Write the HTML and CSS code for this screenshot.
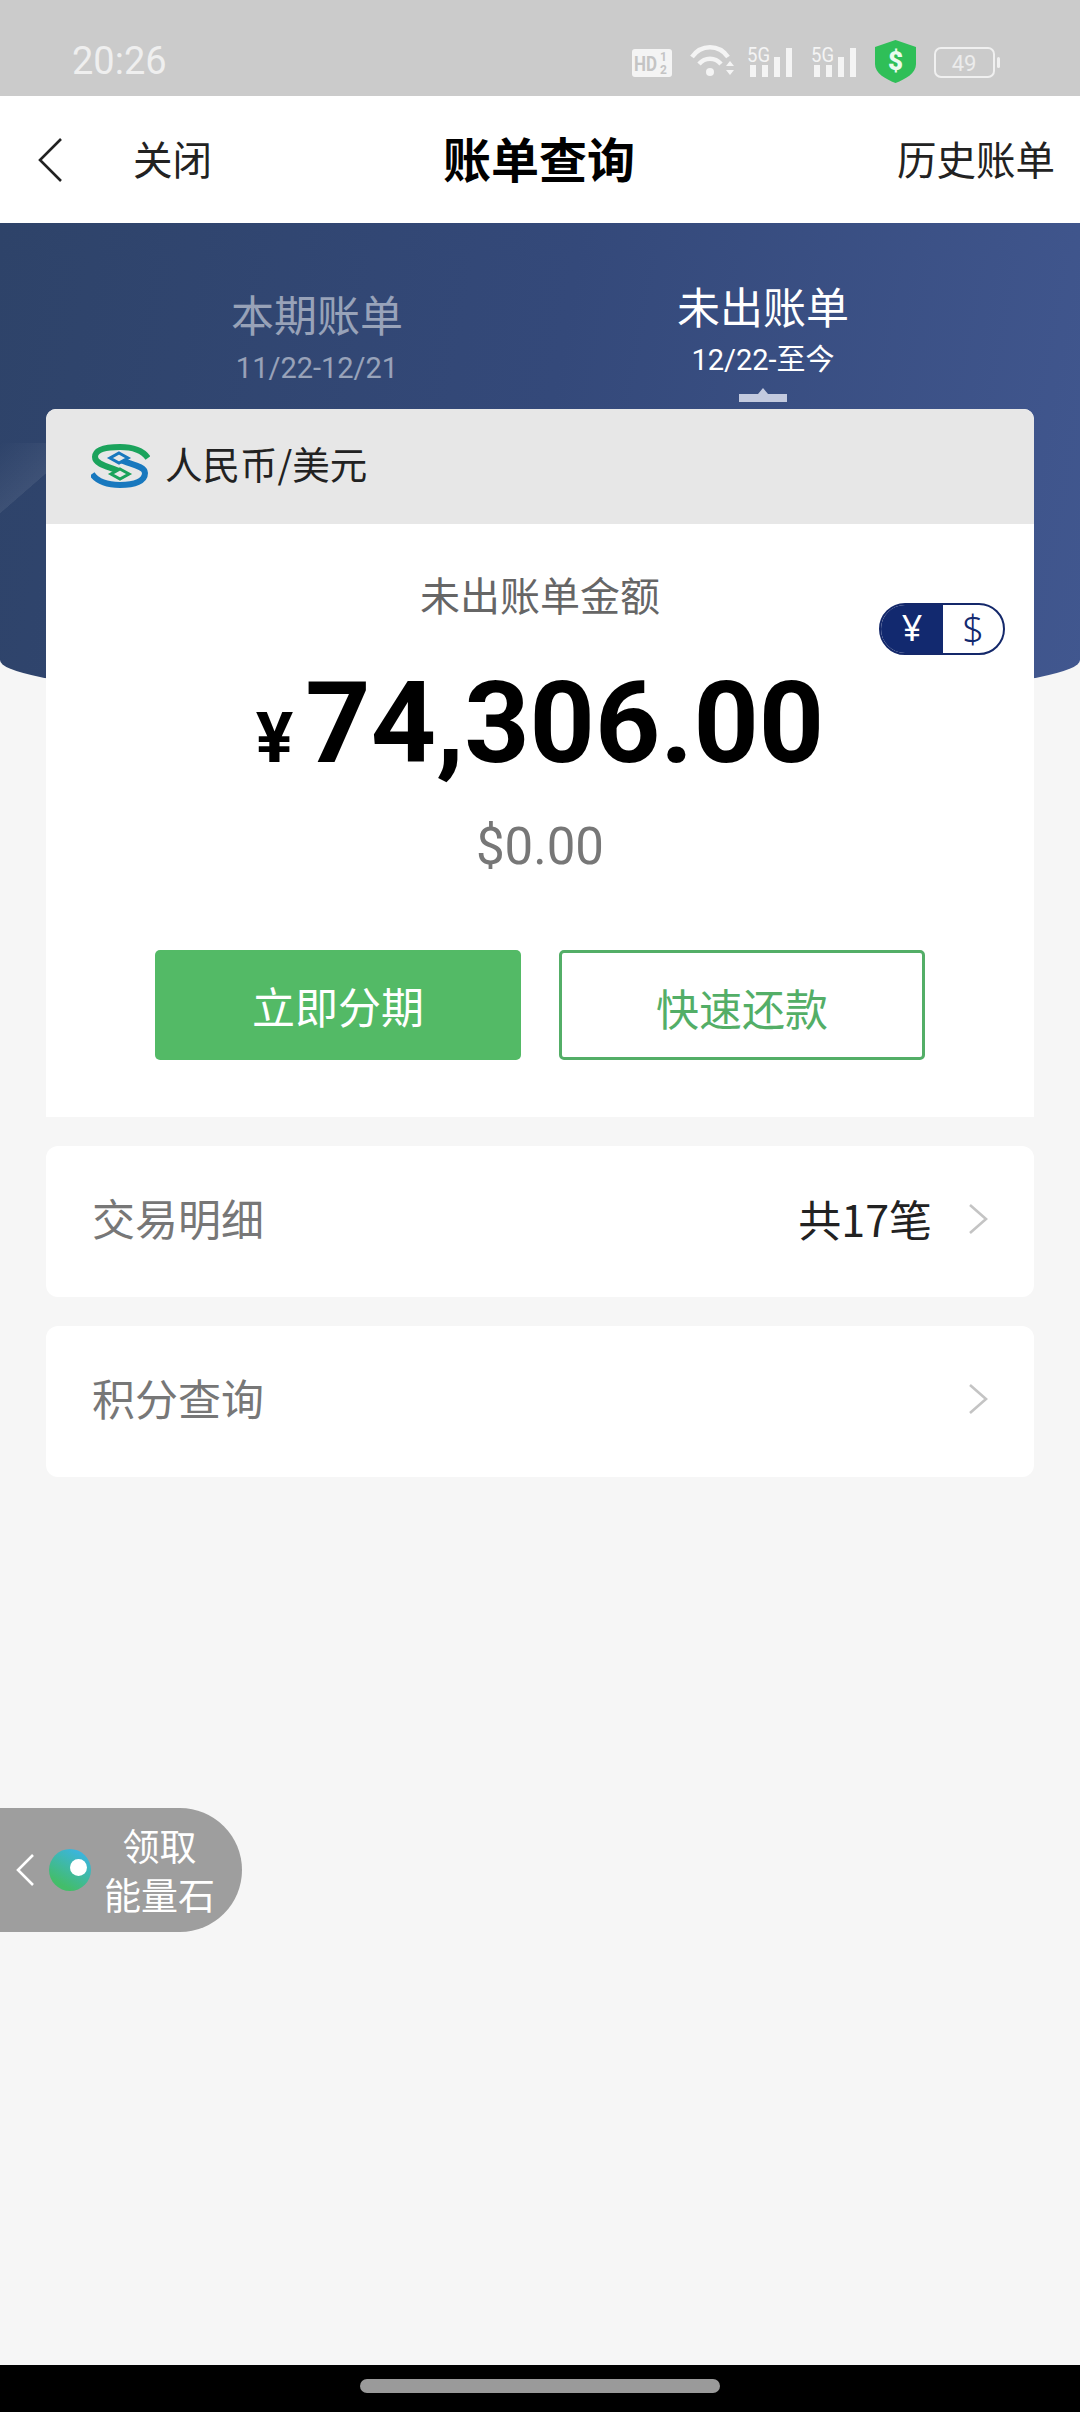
FILE: index.html
```html
<!DOCTYPE html>
<html lang="zh-CN">
<head>
  <meta charset="UTF-8">
  <meta name="viewport" content="width=device-width, initial-scale=1.0">
  <title>账单查询</title>
  <link rel="stylesheet" href="styles.css">
</head>
<body>
  <div class="status-bar">
    <span class="time">20:26</span>
    <div class="status-icons">
      <svg class="ic-hd" width="40" height="28" viewBox="0 0 40 28">
        <rect width="40" height="28" rx="3" fill="#f4f4f4"/>
        <text x="2" y="22" font-family="Roboto" font-weight="700" font-size="21" fill="#c4c4c4" textLength="23" lengthAdjust="spacingAndGlyphs">HD</text>
        <text x="28" y="12" font-family="Roboto" font-weight="700" font-size="12" fill="#c4c4c4">1</text>
        <text x="28" y="25" font-family="Roboto" font-weight="700" font-size="12" fill="#c4c4c4">2</text>
      </svg>
      <svg class="ic-wifi" width="45" height="32" viewBox="0 0 45 32" fill="none" stroke="#f4f4f4" stroke-width="4.5">
        <path d="M2 12 C11 -1 29 -1 38 12"/>
        <path d="M9 19 C15 12 25 12 31 19"/>
        <circle cx="20" cy="27" r="4" fill="#f4f4f4" stroke="none"/>
        <path d="M36 21 L40 16 L44 21 Z M36 25 L44 25 L40 30 Z" fill="#f4f4f4" stroke="none"/>
      </svg>
      <svg class="ic-sig" width="46" height="38" viewBox="0 -8 46 38">
        <text x="0" y="15" font-family="Roboto" font-size="21" fill="#f4f4f4" textLength="23" lengthAdjust="spacingAndGlyphs">5G</text>
        <g fill="#f4f4f4"><rect x="3" y="18" width="6" height="12"/><rect x="15" y="18" width="6" height="12"/><rect x="27" y="10" width="6" height="20"/><rect x="39" y="1" width="6" height="29"/></g>
      </svg>
      <svg class="ic-sig" width="46" height="38" viewBox="0 -8 46 38">
        <text x="0" y="15" font-family="Roboto" font-size="21" fill="#f4f4f4" textLength="23" lengthAdjust="spacingAndGlyphs">5G</text>
        <g fill="#f4f4f4"><rect x="3" y="18" width="6" height="12"/><rect x="15" y="18" width="6" height="12"/><rect x="27" y="10" width="6" height="20"/><rect x="39" y="1" width="6" height="29"/></g>
      </svg>
      <svg class="ic-shield" width="41" height="43" viewBox="0 0 41 43">
        <path d="M20.5 0 L41 7 V24 C41 33 31 39 20.5 43 C10 39 0 33 0 24 V7 Z" fill="#2fbf58"/>
        <text x="20.5" y="30" text-anchor="middle" font-family="Roboto" font-weight="900" font-size="26" fill="#eafbee">$</text>
      </svg>
      <svg class="ic-batt" width="66" height="31" viewBox="0 0 66 31">
        <rect x="1" y="1" width="59" height="29" rx="6" fill="none" stroke="#f0f0f0" stroke-width="2"/>
        <rect x="63" y="10" width="3" height="11" rx="1.5" fill="#f0f0f0"/>
        <text x="30" y="24" text-anchor="middle" font-family="Roboto" font-size="22" fill="#ececec">49</text>
      </svg>
    </div>
  </div>

  <div class="nav">
    <div class="nav-left">
      <svg width="26" height="46" viewBox="0 0 26 46" fill="none" stroke="#222" stroke-width="2.6">
        <path d="M24 2 L3 23 L24 44"/>
      </svg>
      <span class="close">关闭</span>
    </div>
    <div class="nav-title">账单查询</div>
    <div class="nav-right">历史账单</div>
  </div>

  <div class="hero">
    <div class="tabs">
      <div class="tab">
        <div class="tab-name">本期账单</div>
        <div class="tab-date">11/22-12/21</div>
      </div>
      <div class="tab active">
        <div class="tab-name">未出账单</div>
        <div class="tab-date">12/22-至今</div>
        <svg class="tab-mark" width="48" height="14" viewBox="0 0 48 14">
          <path d="M0 6 H19 L24 0 L29 6 H48 V14 H0 Z" fill="#c3cadf"/>
        </svg>
      </div>
    </div>
  </div>

  <div class="card">
    <div class="card-head">
      <svg class="logo" width="59" height="44" viewBox="0 0 59 44" fill="none">
        <path d="M57 14 C50 4 38 3 29 3 C14 3 4 6 4 13 C4 21 20 23 28 27" stroke="#1ba35c" stroke-width="6"/>
        <path d="M1 30 C8 40 20 41 29 41 C44 41 54 37 54 29 C54 22 38 20 30 16" stroke="#1878be" stroke-width="6"/>
        <path d="M28 9 L37 14 L28 19 L19 14 Z" fill="#e7e7e7" stroke="#1878be" stroke-width="3"/>
        <path d="M29 25 L38 30 L29 35 L20 30 Z" fill="#e7e7e7" stroke="#1ba35c" stroke-width="3"/>
      </svg>
      <span class="currency">人民币/美元</span>
    </div>
    <div class="card-body">
      <div class="toggle">
        <span class="toggle-on">¥</span>
        <span class="toggle-off">$</span>
      </div>
      <div class="amount-label">未出账单金额</div>
      <div class="amount"><span class="yen">¥</span>74,306.00</div>
      <div class="amount-usd">$0.00</div>
      <div class="actions">
        <div class="btn btn-fill">立即分期</div>
        <div class="btn btn-line">快速还款</div>
      </div>
    </div>
  </div>

  <div class="row">
    <span class="row-name">交易明细</span>
    <span class="row-value">共17笔</span>
    <svg class="chevron" width="20" height="32" viewBox="0 0 20 32" fill="none" stroke="#c4c4c4" stroke-width="2.6">
      <path d="M2 2 L18 16 L2 30"/>
    </svg>
  </div>
  <div class="row">
    <span class="row-name">积分查询</span>
    <svg class="chevron" width="20" height="32" viewBox="0 0 20 32" fill="none" stroke="#c4c4c4" stroke-width="2.6">
      <path d="M2 2 L18 16 L2 30"/>
    </svg>
  </div>

  <div class="float-tip">
    <svg width="20" height="34" viewBox="0 0 20 34" fill="none" stroke="#fff" stroke-width="2.6">
      <path d="M18 2 L3 17 L18 32"/>
    </svg>
    <div class="orb"><span class="orb-dot"></span></div>
    <div class="float-text">领取<br>能量石</div>
  </div>

  <div class="home-bar"><span class="home-pill"></span></div>
</body>
</html>
```

FILE: styles.css
```css
* {
  box-sizing: border-box;
}
body {
  margin: 0;
  width: 1080px;
  height: 2412px;
  position: relative;
  overflow: hidden;
  background: #f6f6f6;
  font-family: 'Noto Sans CJK SC', 'Noto Sans', sans-serif;
  color: #222;
}

.status-bar {
  height: 96px;
  background: #cbcbcb;
  display: flex;
  align-items: flex-start;
  justify-content: space-between;
  padding: 38px 80px 0 72px;
}
.time {
  font-family: Roboto, sans-serif;
  font-size: 38px;
  line-height: 46px;
  color: #efefef;
}
.status-icons {
  display: flex;
  align-items: flex-start;
  padding-top: 2px;
}
.ic-hd { margin: 9px 18px 0 0; }
.ic-wifi { margin: 5px 12px 0 0; }
.ic-sig { margin: -1px 18px 0 0; }
.ic-shield { margin-right: 18px; }
.ic-batt { margin-top: 7px; }

.nav {
  height: 127px;
  background: #fff;
  display: flex;
  align-items: center;
  position: relative;
  padding: 0 25px 0 37px;
}
.nav-left {
  display: flex;
  align-items: center;
  gap: 70px;
  width: 406px;
}
.close {
  font-size: 39.5px;
  line-height: 52px;
  margin-top: -3px;
  color: #222;
}
.nav-title {
  font-size: 48px;
  line-height: 64px;
  margin-top: -5px;
  font-weight: 700;
  color: #000;
}
.nav-right {
  margin-left: auto;
  margin-top: -3px;
  font-size: 39.5px;
  line-height: 52px;
  color: #222;
}

.hero {
  height: 482px;
  background:
    linear-gradient(139deg, rgba(255, 255, 255, 0) 0%, rgba(255, 255, 255, 0.07) 50%, rgba(255, 255, 255, 0) 50.5%) 0 220px / 46px 100px no-repeat,
    linear-gradient(100deg, #2e4369 0%, #34497a 50%, #41578f 100%);
  border-radius: 0 0 50% 50% / 0 0 45px 45px;
  padding: 0 94px;
}
.tabs {
  display: grid;
  grid-template-columns: 446px 446px;
}
.tab {
  display: flex;
  flex-direction: column;
  align-items: center;
  padding-top: 58px;
  color: rgba(255, 255, 255, 0.5);
}
.tab.active {
  padding-top: 50px;
  color: #fff;
}
.tab-name {
  font-size: 43px;
  line-height: 64px;
}
.tab-date {
  font-family: Roboto, 'Noto Sans CJK SC', sans-serif;
  font-size: 29px;
  line-height: 36px;
  margin-top: 5px;
}
.tab-mark {
  margin-top: 10px;
}

.card {
  margin: -296px 46px 0;
  height: 708px;
  position: relative;
  border-radius: 10px 10px 0 0;
  overflow: hidden;
  background: #fff;
}
.card-head {
  height: 115px;
  background: #e7e7e7;
  display: flex;
  align-items: center;
  padding-left: 45px;
  gap: 15px;
}
.logo {
  margin-top: -2px;
}
.currency {
  font-size: 37.5px;
  line-height: 50px;
  margin-top: -7px;
  color: #222;
}
.card-body {
  position: relative;
  display: flex;
  flex-direction: column;
  align-items: center;
}
.toggle {
  position: absolute;
  top: 79px;
  right: 29px;
  width: 126px;
  height: 52px;
  display: flex;
  border: 2px solid #14286a;
  border-radius: 26px;
  overflow: hidden;
  font-family: 'Noto Sans', sans-serif;
  font-size: 36px;
  line-height: 46px;
  text-align: center;
}
.toggle-on {
  width: 62px;
  background: #12296f;
  color: #fff;
}
.toggle-off {
  flex: 1;
  font-size: 38px;
  font-weight: 300;
  color: #12296f;
}
.amount-label {
  margin-top: 41px;
  font-size: 40px;
  line-height: 58px;
  color: #666;
}
.amount {
  margin-top: 33px;
  font-family: Roboto, sans-serif;
  font-weight: 700;
  font-size: 114px;
  line-height: 134px;
  color: #000;
  display: flex;
  align-items: baseline;
}
.yen {
  font-size: 70px;
  margin-right: 12px;
}
.amount-usd {
  margin-top: 12px;
  font-family: Roboto, sans-serif;
  font-size: 51px;
  line-height: 60px;
  color: #777;
}
.actions {
  display: flex;
  gap: 38px;
  margin-top: 73px;
}
.btn {
  width: 366px;
  height: 110px;
  border-radius: 5px;
  display: flex;
  align-items: center;
  justify-content: center;
  font-size: 43px;
}
.btn-fill {
  background: #53ba66;
  color: #fff;
}
.btn-line {
  border: 3px solid #53ae67;
  color: #53ae67;
  padding-top: 3px;
}

.row {
  margin: 29px 46px 0;
  height: 151px;
  background: #fff;
  border-radius: 12px;
  display: flex;
  align-items: center;
  padding: 0 46px 6px;
}
.row-name {
  font-size: 43px;
  margin-top: -3px;
  color: #777;
}
.row-value {
  margin-left: auto;
  margin-top: -2px;
  font-family: 'Noto Sans CJK SC', sans-serif;
  font-size: 43px;
  color: #222;
}
.chevron {
  margin-left: auto;
}
.row-value + .chevron {
  margin-left: 36px;
}

.float-tip {
  position: absolute;
  left: 0;
  top: 1808px;
  width: 242px;
  height: 124px;
  background: #9e9e9e;
  border-radius: 0 62px 62px 0;
  display: flex;
  align-items: center;
  padding-left: 15px;
  color: #fff;
}
.orb {
  width: 42px;
  height: 42px;
  margin-left: 14px;
  flex: none;
  border-radius: 50%;
  background: linear-gradient(30deg, #43bd6a 20%, #3bb5dc 85%);
  position: relative;
}
.orb-dot {
  position: absolute;
  left: 21px;
  top: 10px;
  width: 17px;
  height: 17px;
  border-radius: 50%;
  background: #fff;
}
.float-text {
  flex: 1;
  margin-right: 14px;
  text-align: center;
  font-size: 37px;
  line-height: 49px;
}

.home-bar {
  position: absolute;
  left: 0;
  bottom: 0;
  width: 100%;
  height: 47px;
  background: #000;
  display: flex;
  justify-content: center;
  padding-top: 14px;
}
.home-pill {
  width: 360px;
  height: 14px;
  border-radius: 7px;
  background: #9a9a9a;
}
```
